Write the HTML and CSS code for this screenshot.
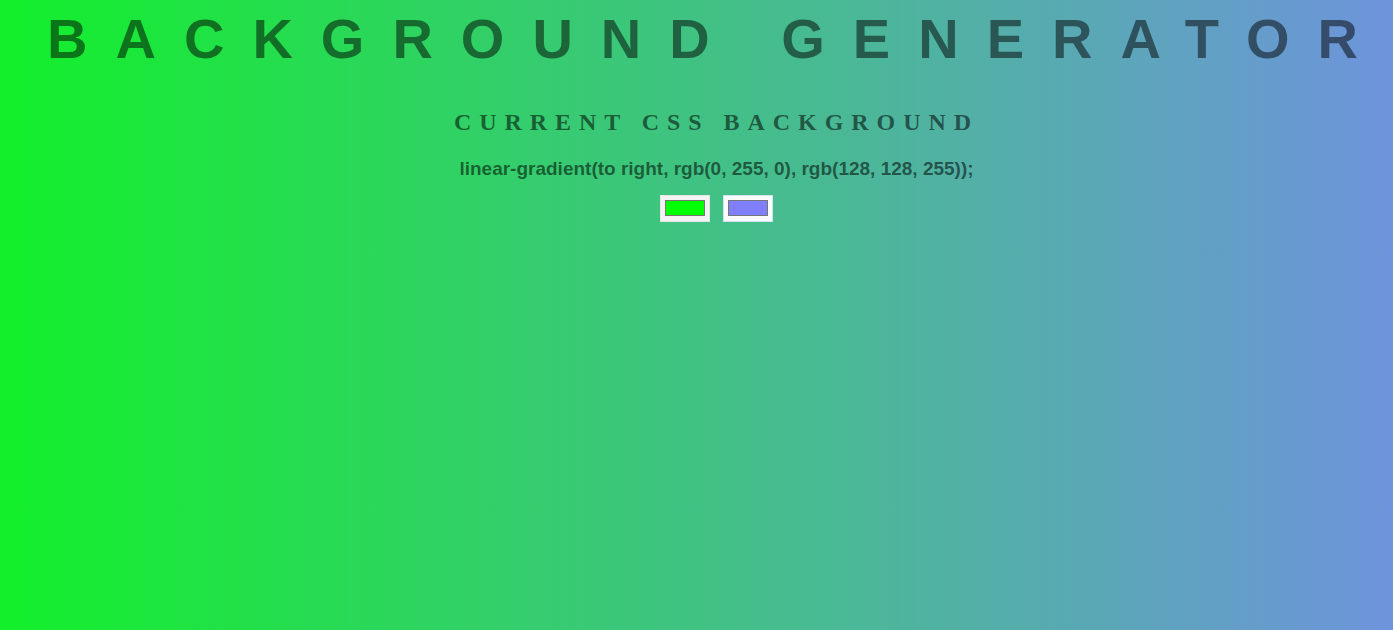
FILE: index.html
```html
<!DOCTYPE html>
<html lang="en">
<head>
<meta charset="utf-8">
<title>Background Generator</title>
<link rel="stylesheet" href="styles.css">
</head>
<body class="page">
  <main class="generator">
    <h1 class="title">Background Generator</h1>
    <h3 class="subtitle">Current CSS Background</h3>
    <p class="css-output">linear-gradient(to right, rgb(0, 255, 0), rgb(128, 128, 255));</p>
    <div class="pickers">
      <input class="picker picker-one" type="color" name="color1" value="#00ff00">
      <input class="picker picker-two" type="color" name="color2" value="#8080ff">
    </div>
  </main>
</body>
</html>
```
FILE: styles.css
```css
html, body {
  margin: 0;
  padding: 0;
}

.page {
  min-height: 100vh;
  box-sizing: border-box;
  background: linear-gradient(to right, #12f02a, #6e94dc);
  color: rgba(0, 0, 0, 0.5);
  text-align: center;
}

.generator {
  padding: 7px 0 0 40px;
  display: flex;
  flex-direction: column;
  align-items: center;
}

.title {
  margin: 0;
  font: 700 56px/64px "Liberation Sans", Arial, sans-serif;
  text-transform: uppercase;
  letter-spacing: 0.5em;
  white-space: nowrap;
}

.subtitle {
  margin: 36px 0 0;
  font: 700 24px/30px "Liberation Serif", "Times New Roman", serif;
  text-transform: uppercase;
  letter-spacing: 7.95px;
  color: rgba(0, 0, 0, 0.55);
}

.css-output {
  margin: 21px 0 0;
  font: 700 19px/22px "Liberation Sans", Arial, sans-serif;
  color: rgba(0, 0, 0, 0.55);
}

.pickers {
  margin-top: 15px;
  display: flex;
  gap: 13px;
  justify-content: center;
}

.picker {
  -webkit-appearance: none;
  appearance: none;
  width: 50px;
  height: 27px;
  margin: 0;
  padding: 0;
  box-sizing: border-box;
  border: 1px solid #e6e6e6;
  background: #f4f4f4;
  cursor: pointer;
}

.picker-two {
  border-color: #d6e0f4;
  background: #fbfcff;
}

.picker::-webkit-color-swatch-wrapper {
  padding: 4px 4px 5px;
}

.picker::-webkit-color-swatch {
  border: 1px solid #777777;
  border-radius: 0;
}
```
